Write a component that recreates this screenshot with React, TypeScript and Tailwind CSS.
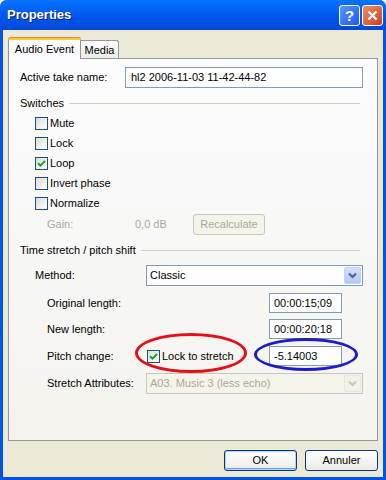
import React from 'react';

const font = { fontFamily: '"Liberation Sans", Arial, sans-serif' };

const CheckBox = ({ checked }: { checked?: boolean }) => (
  <span className="w-[13px] h-[13px] shrink-0 border border-[#1c5180] bg-linear-to-br from-[#dcdcd7] to-white flex items-center justify-center">
    {checked && (
      <svg width="9" height="9" viewBox="0 0 9 9">
        <path d="M1 4.2 L3.4 6.6 L8 2" stroke="#21a121" strokeWidth="2" fill="none" />
      </svg>
    )}
  </span>
);

const Chevron = ({ color }: { color: string }) => (
  <svg width="9" height="7" viewBox="0 0 9 7">
    <path d="M1 1.5 L4.5 5 L8 1.5" stroke={color} strokeWidth="2" fill="none" />
  </svg>
);

const SectionHeader = ({ title }: { title: string }) => (
  <div className="flex items-center h-[14px] pr-[17px]">
    <span>{title}</span>
    <div className="flex-1 h-px bg-[#d0d0bf] ml-[5px]" />
  </div>
);

const Field = ({ value }: { value: string }) => (
  <div className="w-[73px] h-[20px] border border-[#7f9db9] bg-white flex items-center pl-[4px]">{value}</div>
);

const CheckRow = ({ label, checked }: { label: string; checked?: boolean }) => (
  <div className="flex items-center h-[20px] pl-[15px] gap-[2px]">
    <CheckBox checked={checked} />
    <span>{label}</span>
  </div>
);

export default function App() {
  return (
    <div className="w-[386px] h-[480px] bg-white text-[11px] text-black overflow-hidden" style={font}>
      <div className="w-[386px] h-[480px] flex flex-col rounded-t-[7px] overflow-hidden bg-[#0054e3]">
        {/* title bar */}
        <div className="h-[30px] shrink-0 flex items-center pl-[7px] pr-[3px] bg-linear-to-b from-[#0a74ff] via-[#0058ee] to-[#0048d8]">
          <span className="flex-1 text-white font-bold text-[13px] [text-shadow:1px_1px_0_#0a1f7a]">Properties</span>
          <div className="flex gap-[2px]">
            <div className="w-[21px] h-[21px] rounded-[3px] border border-white bg-linear-to-br from-[#5a96ff] to-[#1c5ae6] flex items-center justify-center text-white font-bold text-[15px] leading-none">?</div>
            <div className="w-[21px] h-[21px] rounded-[3px] border border-white bg-linear-to-br from-[#f08c6c] to-[#c8401a] flex items-center justify-center">
              <svg width="11" height="11" viewBox="0 0 11 11">
                <path d="M1.5 1.5 L9.5 9.5 M9.5 1.5 L1.5 9.5" stroke="white" strokeWidth="2.2" />
              </svg>
            </div>
          </div>
        </div>
        {/* body */}
        <div className="flex-1 mx-[3px] mb-[3px] bg-[#ece9d8] flex flex-col pl-[5px] pt-[7px]">
          {/* tabs */}
          <div className="flex items-end h-[21px]">
            <div className="relative w-[73px] h-[22px] -mb-px z-10 bg-[#fcfcfe] border-x border-[#919b9c] rounded-t-[3px] flex items-center justify-center pt-[2px]">
              <div className="absolute top-0 -left-px -right-px h-[3px] rounded-t-[3px] bg-[#ffc83c] border-t border-[#e68b2c]" />
              Audio Event
            </div>
            <div className="w-[38px] h-[18px] border-t border-r border-[#919b9c] rounded-tr-[3px] bg-linear-to-b from-white to-[#ecebe5] flex items-center justify-center pt-[1px]">
              Media
            </div>
          </div>
          {/* pane */}
          <div className="relative w-[370px] h-[383px] border border-[#919b9c] bg-linear-to-b from-[#fcfcfe] to-[#f4f3ee] pl-[11px]">
            <div className="flex items-center mt-[8px] h-[21px]">
              <span className="w-[105px]">Active take name:</span>
              <div className="w-[238px] h-[21px] border border-[#7f9db9] bg-white flex items-center pl-[5px]">hl2 2006-11-03 11-42-44-82</div>
            </div>
            <div className="mt-[8px]">
              <SectionHeader title="Switches" />
            </div>
            <div className="mt-[3px]">
              <CheckRow label="Mute" />
              <CheckRow label="Lock" />
              <CheckRow label="Loop" checked />
              <CheckRow label="Invert phase" />
              <CheckRow label="Normalize" />
            </div>
            <div className="flex items-center h-[21px] mt-[1px] pl-[27px] text-[#aca899]">
              <span className="w-[88px]">Gain:</span>
              <span className="w-[58px]">0,0 dB</span>
              <div className="w-[72px] h-[21px] rounded-[3px] border border-[#c9c7ba] bg-[#f5f4ea] flex items-center justify-center">Recalculate</div>
            </div>
            <div className="mt-[8px]">
              <SectionHeader title="Time stretch / pitch shift" />
            </div>
            <div className="flex items-center mt-[8px] h-[21px] pl-[15px]">
              <span className="w-[111px]">Method:</span>
              <div className="w-[217px] h-[21px] border border-[#7f9db9] bg-white flex items-center pl-[3px]">
                <span className="flex-1">Classic</span>
                <div className="w-[17px] h-[17px] mr-px rounded-[2px] bg-linear-to-b from-[#d2dffd] to-[#b4c8f6] border border-[#c3d3fd] flex items-center justify-center">
                  <Chevron color="#4d6185" />
                </div>
              </div>
            </div>
            <div className="flex items-center mt-[7px] h-[20px] pl-[27px]">
              <span className="w-[222px]">Original length:</span>
              <Field value="00:00:15;09" />
            </div>
            <div className="flex items-center mt-[6px] h-[20px] pl-[27px]">
              <span className="w-[222px]">New length:</span>
              <Field value="00:00:20;18" />
            </div>
            <div className="flex items-center mt-[7px] h-[20px] pl-[27px]">
              <span className="w-[100px]">Pitch change:</span>
              <div className="flex items-center gap-[2px] w-[122px]">
                <CheckBox checked />
                <span>Lock to stretch</span>
              </div>
              <Field value="-5.14003" />
            </div>
            <div className="flex items-center mt-[7px] h-[21px] pl-[27px]">
              <span className="w-[99px]">Stretch Attributes:</span>
              <div className="w-[217px] h-[21px] border border-[#c9c7ba] bg-[#f5f4ea] flex items-center pl-[3px] text-[#aca899]">
                <span className="flex-1">A03. Music 3 (less echo)</span>
                <div className="w-[17px] h-[17px] mr-px rounded-[2px] bg-[#f2f1ea] border border-[#e6e5dc] flex items-center justify-center">
                  <Chevron color="#c9c7ba" />
                </div>
              </div>
            </div>
            {/* annotation ellipses */}
            <div className="absolute left-[126px] top-[274px] w-[112px] h-[40px] rounded-[50%] border-[3px] border-[#e3101b]" />
            <div className="absolute left-[245px] top-[279px] w-[104px] h-[33px] rounded-[50%] border-[3px] border-[#1c1cc8]" />
          </div>
          {/* buttons */}
          <div className="flex justify-end gap-[8px] mt-[9px] pr-[5px]">
            <div className="w-[73px] h-[21px] rounded-[3px] border border-[#003c74] bg-linear-to-b from-white to-[#ecebe6] shadow-[inset_0_0_0_1px_#b3d1f8,inset_0_-1px_0_1px_#6b9ff0] flex items-center justify-center">OK</div>
            <div className="w-[73px] h-[21px] rounded-[3px] border border-[#003c74] bg-linear-to-b from-white to-[#ecebe6] flex items-center justify-center">Annuler</div>
          </div>
        </div>
      </div>
    </div>
  );
}
